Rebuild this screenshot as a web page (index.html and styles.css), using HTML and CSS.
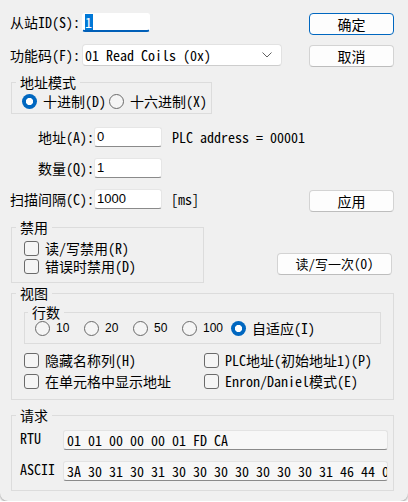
FILE: index.html
```html
<!DOCTYPE html>
<html lang="zh-CN">
<head>
<meta charset="utf-8">
<title>Read/Write Definition</title>
<link rel="stylesheet" href="styles.css">
</head>
<body>
<div class="dialog">
  <div class="row r-slave">
    <span class="lbl">从站ID(S):</span>
    <div class="edit edit-id"><span class="selected">1</span></div>
    <button class="btn btn-default">确定</button>
  </div>

  <div class="row r-func">
    <span class="lbl lbl-func">功能码(F):</span>
    <div class="combo">
      <span class="combo-text">01 Read Coils (0x)</span>
      <svg class="chev" width="10" height="6" viewBox="0 0 10 6"><path d="M0.5 0.5 L5 5 L9.5 0.5" fill="none" stroke="#606060" stroke-width="1"/></svg>
    </div>
    <button class="btn btn-cancel">取消</button>
  </div>

  <fieldset class="grp grp-addr">
    <legend>地址模式</legend>
    <div class="radios">
      <span class="radio-item"><span class="radio checked"></span>十进制(D)</span>
      <span class="radio-item"><span class="radio"></span>十六进制(X)</span>
    </div>
  </fieldset>

  <div class="row r-field r-addr">
    <span class="lbl">地址(A):</span>
    <div class="edit edit-num">0</div>
    <span class="note">PLC address = 00001</span>
  </div>

  <div class="row r-field r-qty">
    <span class="lbl">数量(Q):</span>
    <div class="edit edit-num">1</div>
  </div>

  <div class="row r-field r-scan">
    <span class="lbl">扫描间隔(C):</span>
    <div class="edit edit-num">1000</div>
    <span class="note note-ms">[ms]</span>
    <button class="btn btn-apply">应用</button>
  </div>

  <div class="row r-disable">
    <fieldset class="grp grp-disable">
      <legend>禁用</legend>
      <div class="check"><span class="box"></span>读/写禁用(R)</div>
      <div class="check"><span class="box"></span>错误时禁用(D)</div>
    </fieldset>
    <button class="btn btn-once">读/写一次(O)</button>
  </div>

  <fieldset class="grp grp-view">
    <legend>视图</legend>
    <fieldset class="grp grp-rows">
      <legend>行数</legend>
      <div class="radios">
        <span class="radio-item"><span class="radio"></span><span class="num">10</span></span>
        <span class="radio-item"><span class="radio"></span><span class="num">20</span></span>
        <span class="radio-item"><span class="radio"></span><span class="num">50</span></span>
        <span class="radio-item"><span class="radio"></span><span class="num">100</span></span>
        <span class="radio-item"><span class="radio checked"></span>自适应(I)</span>
      </div>
    </fieldset>
    <div class="check-grid">
      <div class="check"><span class="box"></span>隐藏名称列(H)</div>
      <div class="check"><span class="box"></span>PLC地址(初始地址1)(P)</div>
      <div class="check"><span class="box"></span>在单元格中显示地址</div>
      <div class="check"><span class="box"></span>Enron/Daniel模式(E)</div>
    </div>
  </fieldset>

  <fieldset class="grp grp-req">
    <legend>请求</legend>
    <div class="req-row">
      <span class="req-lbl">RTU</span>
      <div class="req-field">01 01 00 00 00 01 FD CA</div>
    </div>
    <div class="req-row">
      <span class="req-lbl">ASCII</span>
      <div class="req-field">3A 30 31 30 31 30 30 30 30 30 30 30 31 46 44 0D 0A</div>
    </div>
  </fieldset>
</div>
</body>
</html>
```

FILE: styles.css
```css
html, body {
  margin: 0;
  padding: 0;
  background: #ffffff;
}

body {
  font-family: "Noto Sans Mono CJK SC", "Noto Sans CJK SC", monospace;
  font-size: 14px;
  color: #000;
}

.dialog {
  width: 408px;
  height: 501px;
  box-sizing: border-box;
  padding: 13px 14px 0 10px;
  background: #f0f0f0;
  border-radius: 0 0 8px 8px;
  box-shadow: 0 1px 3px rgba(0, 0, 0, 0.45);
  overflow: hidden;
}

.row {
  display: flex;
  align-items: flex-start;
}

.lbl {
  line-height: 19px;
  white-space: nowrap;
}

.r-slave {
  height: 22px;
}

.edit {
  box-sizing: border-box;
  background: #fff;
  border: 1px solid #e6e6e6;
  border-bottom-color: #8a8a8a;
  border-radius: 3px;
  white-space: nowrap;
}

.edit-id {
  margin-left: 2px;
  width: 68px;
  height: 19px;
  border-color: #fff;
  border-bottom: 2px solid #005fb8;
  padding-left: 2px;
  line-height: 16px;
}

.selected {
  display: inline-block;
  background: #0078d7;
  color: #fff;
  line-height: 16px;
  padding: 0 1px 0 0;
}

.r-func {
  margin-top: 9px;
}

.lbl-func {
  line-height: 22px;
}

.combo {
  margin-left: 2px;
  width: 200px;
  height: 22px;
  box-sizing: border-box;
  border: 1px solid #e2e2e2;
  border-bottom-color: #cdcdcd;
  border-radius: 4px;
  background: #fff;
  display: flex;
  align-items: center;
  padding-left: 2px;
}

.combo-text {
  flex: 1;
  line-height: 20px;
  white-space: nowrap;
}

.chev {
  margin-right: 9px;
  flex: none;
}

.btn {
  margin-left: auto;
  width: 85px;
  height: 22px;
  box-sizing: border-box;
  padding: 0;
  border: 1px solid #d3d3d3;
  border-bottom-color: #bdbdbd;
  border-radius: 4px;
  background: #fdfdfd;
  font: inherit;
  line-height: 20px;
  color: #000;
  flex: none;
}

.btn-default {
  border-color: #0067c0;
}

.btn-cancel,
.btn-apply {
  margin-top: 1px;
}

.grp {
  margin: 0;
  padding: 0;
  border: 1px solid #dcdcdc;
  min-width: 0;
  box-sizing: border-box;
}

.grp legend {
  padding: 0 4px;
  margin: 0;
  line-height: 16px;
}

.grp-addr {
  margin: 7px 0 0 1px;
  width: 201px;
  padding: 3px 0 4px 4px;
}

.radios {
  display: flex;
  align-items: center;
  height: 16px;
}

.radio-item {
  display: inline-flex;
  align-items: center;
  line-height: 16px;
  white-space: nowrap;
  flex: none;
}

.radio {
  width: 15px;
  height: 15px;
  box-sizing: border-box;
  border-radius: 50%;
  border: 1px solid #6a6a6a;
  background: #f5f5f5;
  margin-right: 6px;
  flex: none;
}

.radio.checked {
  border: none;
  background: radial-gradient(circle at center, #fff 0, #fff 3.3px, #0067c0 3.9px);
}

.grp-addr .radio-item:first-child {
  margin-left: 6px;
}

.grp-addr .radio-item + .radio-item {
  margin-left: 3px;
}

.num {
  font-family: "Liberation Sans", Arial, sans-serif;
  font-size: 12px;
}

.r-field .lbl {
  width: 84px;
  text-align: right;
  line-height: 20px;
}

.r-addr {
  margin-top: 13px;
}

.r-qty,
.r-scan {
  margin-top: 11px;
}

.edit-num {
  width: 68px;
  height: 20px;
  padding-left: 2px;
  font-family: "Liberation Sans", Arial, sans-serif;
  font-size: 13px;
  line-height: 18px;
}

.note {
  margin-left: 10px;
  line-height: 20px;
  white-space: nowrap;
}

.note-ms {
  margin-left: 9px;
}

.r-disable {
  margin-top: 7px;
}

.grp-disable {
  margin-left: 1px;
  width: 193px;
  padding: 5px 0 8px 4px;
}

.check {
  display: flex;
  align-items: center;
  line-height: 16px;
  white-space: nowrap;
}

.box {
  width: 15px;
  height: 15px;
  box-sizing: border-box;
  border: 1px solid #6a6a6a;
  border-radius: 3px;
  background: #f5f5f5;
  margin-right: 6px;
  flex: none;
}

.grp-disable .check {
  margin-left: 8px;
}

.grp-disable .check + .check {
  margin-top: 2px;
}

.btn-once {
  margin-top: 34px;
  margin-right: 2px;
  width: 115px;
  font-size: 13px;
}

.grp-view {
  margin: 2px 0 0 1px;
  width: 383px;
  padding: 3px 0 10px 4px;
}

.grp-rows {
  margin-left: 8px;
  width: 357px;
  padding: 0 0 7px 3px;
}

.grp-rows .radio-item {
  width: 49px;
}

.grp-rows .radio-item:first-child {
  margin-left: 7px;
}

.grp-rows .radio-item:last-child {
  width: auto;
}

.check-grid {
  display: grid;
  grid-template-columns: 180px auto;
  row-gap: 5px;
  margin: 8px 0 0 8px;
}

.grp-req {
  margin: 7px 0 0 1px;
  width: 383px;
  padding: 7px 0 9px 4px;
}

.req-row {
  display: flex;
  align-items: flex-start;
}

.req-row + .req-row {
  margin-top: 11px;
}

.req-lbl {
  width: 43px;
  margin-left: 4px;
  line-height: 16px;
  flex: none;
}

.req-field {
  width: 325px;
  height: 20px;
  box-sizing: border-box;
  border: 1px solid #e3e3e3;
  border-bottom-color: #8a8a8a;
  border-radius: 3px;
  background: #f7f7f7;
  padding-left: 3px;
  line-height: 18px;
  overflow: hidden;
  white-space: nowrap;
}
```
